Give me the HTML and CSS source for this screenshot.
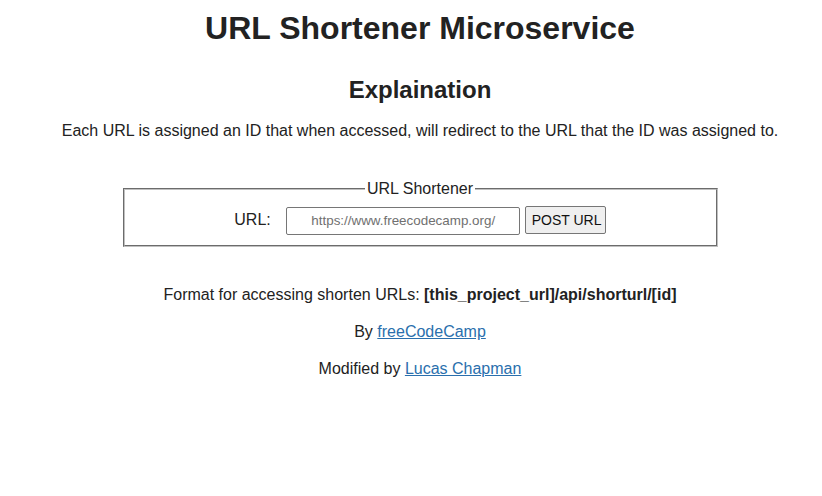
FILE: index.html
```html
<!DOCTYPE html>
<html>
<head>
<meta charset="utf-8">
<title>URL Shortener Microservice</title>
<link rel="stylesheet" href="styles.css">
</head>
<body>
<h1>URL Shortener Microservice</h1>
<main>
  <section>
    <h2>Explaination</h2>
    <p>Each URL is assigned an ID that when accessed, will redirect to the URL that the ID was assigned to.</p>
    <form class="shortener">
      <fieldset class="box">
        <legend>URL Shortener</legend>
        <label for="url_input" class="lbl">URL:</label>
        <input id="url_input" class="url-input" type="text" name="url" placeholder="https://www.freecodecamp.org/">
        <input class="post-btn" type="submit" value="POST URL">
      </fieldset>
    </form>
  </section>
  <section class="info">
    <p>Format for accessing shorten URLs: <strong>[this_project_url]/api/shorturl/[id]</strong></p>
    <p>By <a href="#">freeCodeCamp</a></p>
    <p>Modified by <a href="#">Lucas Chapman</a></p>
  </section>
</main>
</body>
</html>
```
FILE: styles.css
```css
body {
  font-family: "Liberation Sans", Arial, sans-serif;
  color: #222;
  background: #fff;
  text-align: center;
  margin: 8px 8px 8px 26px;
}
h1 {
  font-size: 32px;
  margin: 2px 0 21px;
}
h2 {
  font-size: 24px;
  margin: 29px 0 18px;
}
p {
  font-size: 16px;
  margin: 16px 0;
}
.shortener {
  margin: 40px 0 0;
}
.box {
  width: 579px;
  margin: 0 auto;
  padding: 8px 6px 10px;
  border: 2px groove #c0c0c0;
}
.box legend {
  font-size: 16px;
  padding: 0 2px;
  color: #222;
}
.lbl {
  font-size: 16px;
  margin-right: 11px;
}
.url-input {
  width: 234px;
  height: 28px;
  box-sizing: border-box;
  padding: 4px 8px;
  font-family: "Liberation Sans", Arial, sans-serif;
  font-size: 13.4px;
  text-align: center;
  border: 1px solid #767676;
  border-radius: 2px;
}
.url-input::placeholder {
  color: #707070;
}
.post-btn {
  height: 28px;
  width: 81px;
  font-family: "Liberation Sans", Arial, sans-serif;
  font-size: 14px;
  color: #111;
  background: #efefef;
  border: 1px solid #767676;
  border-radius: 2px;
  margin-left: 0;
}
.info {
  margin-top: 39px;
}
.info p {
  margin: 19px 0;
}
a {
  color: #2a6fad;
}
```
